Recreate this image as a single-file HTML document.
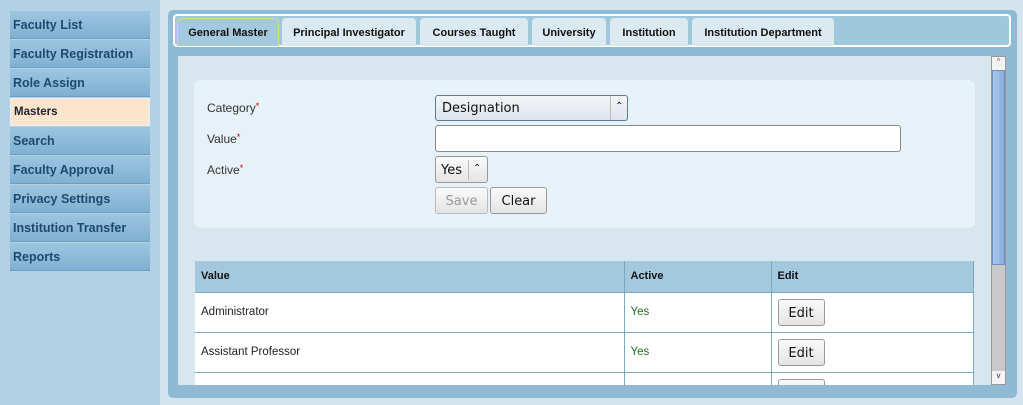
<!DOCTYPE html>
<html><head><style>
*{margin:0;padding:0;box-sizing:border-box}
html,body{width:1023px;height:405px;overflow:hidden}
body{background:#d4e4ee;font-family:"Liberation Sans",sans-serif;position:relative}
.abs{position:absolute}
#side{left:0;top:0;width:160px;height:405px;background:#b4d0e4}
.mi{position:absolute;left:10px;width:140px;height:28px;background:linear-gradient(#9cc6e0,#7fb0d2);border-bottom:1px solid #6f9fc0;color:#1d4a6e;font-weight:bold;font-size:12.5px;padding:7px 0 0 3px}
.mi.act{background:#fde5cd;color:#223;font-size:11.5px;border:1px solid #e8f0f4;padding-top:7px}
#panel{left:168px;top:10px;width:849px;height:388px;background:#8fbad3;border-radius:5px}
#tabbar{left:173px;top:14px;width:838px;height:33px;background:#a0c8dc;border:2px solid #fff;border-radius:4px}
.tab{position:absolute;top:18px;height:28px;background:#dbe9f1;border-radius:4px 4px 0 0;font-weight:bold;font-size:11px;color:#111;text-align:center;padding-top:9px}
#content{left:178px;top:56px;width:828px;height:329px;background:#d8e7ef}
#form{left:194px;top:80px;width:781px;height:148px;background:#e6f2f8;border-radius:7px}
.lbl{position:absolute;left:207px;font-size:12px;color:#333}
.lbl b{color:#c00;font-weight:normal;font-size:9px;vertical-align:top}
.btn{position:absolute;background:linear-gradient(#fafafa,#e4e4e4);border:1px solid #999;border-radius:3px;font-size:13px;text-align:center;color:#111;font-family:"DejaVu Sans",sans-serif}
#tw{position:absolute;left:195px;top:261px;width:779px;height:124px;overflow:hidden}
table{width:779px;border-collapse:collapse;font-size:11px}
th{background:#a4c9de;height:31px;text-align:left;padding-left:6px;font-weight:bold;border-right:1px solid #7ea8c2;color:#111}
td{background:#fff;height:40px;border-top:1px solid #7ea8c2;border-right:1px solid #7ea8c2;padding-left:6px;color:#222;font-size:11.5px}
.y{color:#207020}
#sb{left:991px;top:56px;width:15px;height:329px;background:#c9c9c9;border:1px solid #999}
</style></head><body>
<div id="side" class="abs"></div>
<div class="mi" style="top:11px">Faculty List</div>
<div class="mi" style="top:40px">Faculty Registration</div>
<div class="mi" style="top:69px">Role Assign</div>
<div class="mi act" style="top:98px">Masters</div>
<div class="mi" style="top:127px">Search</div>
<div class="mi" style="top:156px">Faculty Approval</div>
<div class="mi" style="top:185px">Privacy Settings</div>
<div class="mi" style="top:214px">Institution Transfer</div>
<div class="mi" style="top:243px">Reports</div>
<div id="panel" class="abs"></div>
<div id="tabbar" class="abs"></div>
<div class="tab" style="left:177px;width:102px;background:#a4c9de;border:1px solid #d9d98a;border-bottom:none;padding-top:8px">General Master</div>
<div class="tab" style="left:282px;width:134px">Principal Investigator</div>
<div class="tab" style="left:420px;width:108px">Courses Taught</div>
<div class="tab" style="left:532px;width:74px">University</div>
<div class="tab" style="left:610px;width:78px">Institution</div>
<div class="tab" style="left:692px;width:142px">Institution Department</div>
<div id="content" class="abs"></div>
<div id="form" class="abs"></div>
<div class="lbl" style="top:101px">Category<b>*</b></div>
<div class="lbl" style="top:132px">Value<b>*</b></div>
<div class="lbl" style="top:163px">Active<b>*</b></div>
<div class="btn" style="left:435px;top:95px;width:193px;height:26px;text-align:left;padding:5px 6px;border-color:#5a7a9a;background:linear-gradient(#f4f6f8,#dde3e9)">Designation<span style="position:absolute;left:174px;top:0;height:24px;border-left:1px solid #bbb;padding:5px 0 0 4px;font-size:10px">⌃</span></div>
<div class="abs" style="left:435px;top:125px;width:466px;height:27px;background:#fff;border:1px solid #888;border-radius:3px"></div>
<div class="btn" style="left:435px;top:156px;width:53px;height:27px;text-align:left;padding:6px 5px">Yes<span style="position:absolute;left:32px;top:3px;height:20px;border-left:1px solid #bbb;padding:3px 0 0 4px;font-size:10px">⌃</span></div>
<div class="btn" style="left:435px;top:187px;width:53px;height:27px;padding-top:6px;color:#999;border-color:#bbb">Save</div>
<div class="btn" style="left:490px;top:187px;width:57px;height:27px;padding-top:6px">Clear</div>
<div id="tw"><table>
<tr><th style="width:429px">Value</th><th style="width:147px">Active</th><th>Edit</th></tr>
<tr><td>Administrator</td><td class="y">Yes</td><td><div class="btn" style="position:relative;width:47px;height:27px;padding-top:6px">Edit</div></td></tr>
<tr><td>Assistant Professor</td><td class="y">Yes</td><td><div class="btn" style="position:relative;width:47px;height:27px;padding-top:6px">Edit</div></td></tr>
<tr><td></td><td></td><td style="vertical-align:top;padding-top:6px"><div class="btn" style="position:relative;width:47px;height:27px"></div></td></tr>
</table></div>
<div class="abs" style="left:178px;top:385px;width:828px;height:13px;background:#8fbad3"></div>
<div id="sb" class="abs"></div>
<div class="abs" style="left:992px;top:70px;width:13px;height:195px;background:linear-gradient(90deg,#a9c6ec,#8aaee0);border:1px solid #6f8fc0"></div>
<div class="abs" style="left:992px;top:57px;width:13px;height:13px;background:#f4f4f4;font-size:8px;text-align:center;color:#666">^</div>
<div class="abs" style="left:992px;top:371px;width:13px;height:13px;background:#f4f4f4;font-size:8px;text-align:center;color:#333">v</div>
</body></html>
